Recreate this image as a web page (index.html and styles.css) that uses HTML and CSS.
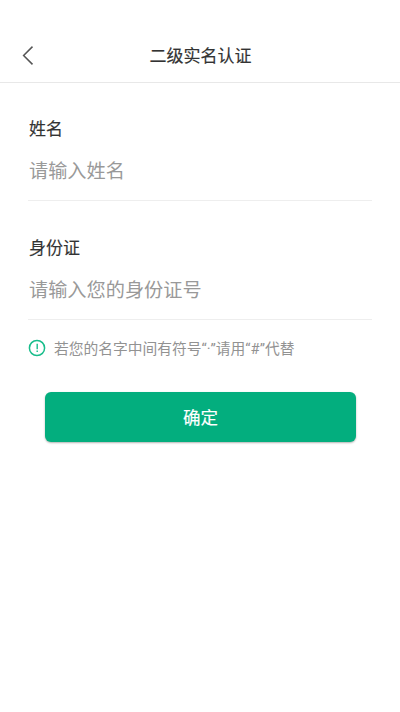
FILE: index.html
```html
<!DOCTYPE html>
<html lang="zh-CN">
<head>
<meta charset="utf-8">
<title>二级实名认证</title>
<link rel="stylesheet" href="styles.css">
</head>
<body>
<header class="header">
  <svg class="back" width="14" height="20" viewBox="0 0 14 20"><path d="M12.5 .6 3.6 9.5 12.5 18.4" fill="none" stroke="#555" stroke-width="1.5"/></svg>
  <h1 class="title">二级实名认证</h1>
</header>
<main class="form">
  <label class="field">
    <span class="label">姓名</span>
    <span class="placeholder">请输入姓名</span>
  </label>
  <label class="field">
    <span class="label">身份证</span>
    <span class="placeholder">请输入您的身份证号</span>
  </label>
  <p class="tip">
    <svg class="tip-icon" width="18" height="18" viewBox="0 0 18 18"><circle cx="9" cy="9" r="7.6" fill="none" stroke="#18bd8b" stroke-width="1.5"/><path d="M9.2 4.8v5.4M9.2 11.6v1.5" stroke="#18bd8b" stroke-width="1.4"/></svg>
    <span>若您的名字中间有符号“·”请用“#”代替</span>
  </p>
  <button class="submit">确定</button>
</main>
</body>
</html>
```
FILE: styles.css
```css
* { box-sizing: border-box; }
body {
  margin: 0;
  height: 712px;
  background: #fff;
  font-family: Roboto, "Noto Sans CJK SC", sans-serif;
}
.header {
  display: grid;
  grid-template-columns: 24px 1fr 24px;
  align-items: center;
  height: 83px;
  padding: 30px 20px 0;
  border-bottom: 1px solid #e8e8e8;
}
.title {
  margin: 0;
  padding-left: 1px;
  font-size: 17px;
  line-height: 24px;
  font-weight: 400;
  -webkit-text-stroke: .15px #333;
  text-align: center;
  color: #333;
}
.form { padding: 0 28px; }
.field {
  display: flex;
  flex-direction: column;
  height: 119px;
  padding: 35px 0 0 1px;
  border-bottom: 1px solid #eee;
}
.field:first-child {
  height: 118px;
  padding-top: 34px;
}
.label {
  font-size: 17px;
  line-height: 24px;
  font-weight: 400;
  -webkit-text-stroke: .15px #333;
  color: #333;
}
.placeholder {
  margin-top: 17px;
  font-size: 19.2px;
  line-height: 28px;
  color: #999;
}
.tip {
  display: flex;
  align-items: center;
  gap: 8px;
  height: 20px;
  margin: 18px 0 0;
  font-size: 14.75px;
  line-height: 20px;
  color: #929292;
  white-space: nowrap;
}
.tip span { padding-top: 1px; }
.submit {
  display: block;
  width: 311px;
  height: 50px;
  margin: 34px 0 0 17px;
  padding: 2px 0 0;
  border: 0;
  border-radius: 6px;
  background: #03ae7e;
  box-shadow: 0 1px 2px rgba(0, 0, 0, .3);
  color: #fff;
  font: 400 17.5px/24px Roboto, "Noto Sans CJK SC", sans-serif;
  -webkit-text-stroke: .15px #fff;
}
```
